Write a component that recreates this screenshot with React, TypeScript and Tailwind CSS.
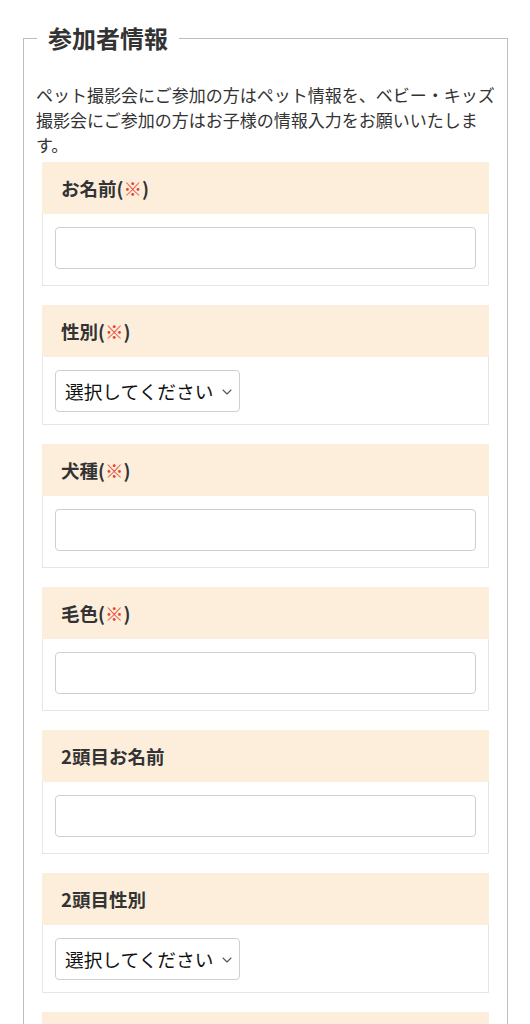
import React from "react";

type Field = { label: string; required: boolean; kind: "input" | "select" };

const fields: Field[] = [
  { label: "お名前", required: true, kind: "input" },
  { label: "性別", required: true, kind: "select" },
  { label: "犬種", required: true, kind: "input" },
  { label: "毛色", required: true, kind: "input" },
  { label: "2頭目お名前", required: false, kind: "input" },
  { label: "2頭目性別", required: false, kind: "select" },
  { label: "2頭目犬種", required: false, kind: "input" },
  { label: "2頭目毛色", required: false, kind: "input" },
];

function Chevron() {
  return (
    <svg width="10" height="6" viewBox="0 0 10 6" fill="none" className="pointer-events-none absolute right-[8px] top-[19px]">
      <path d="M1 1 L5 5 L9 1" stroke="#555" strokeWidth="1.1" strokeLinecap="round" strokeLinejoin="round" />
    </svg>
  );
}

function Card({ f }: { f: Field }) {
  return (
    <div className="mx-[6px] border border-[#e6e6e6] bg-white">
      <div className="-mx-px -mt-px bg-[#fdeedb] px-[19px] py-[13px] text-[18.5px] font-bold leading-[26px] text-[#333]">
        {f.label}
        {f.required && (
          <span>
            (<span className="text-[#e8412c]">※</span>)
          </span>
        )}
      </div>
      {f.kind === "input" ? (
        <div className="px-[12px] pb-[16px] pt-[13px]">
          <input
            type="text"
            className="block h-[42px] w-full rounded-[4px] border border-[#cfcfcf] bg-white px-[10px] text-[17px] text-[#333] outline-none"
          />
        </div>
      ) : (
        <div className="px-[12px] pb-[12px] pt-[13px]">
          <div className="relative w-[185px]">
            <select className="block h-[42px] w-full appearance-none rounded-[4px] border border-[#cfcfcf] bg-white pl-[9px] pr-[24px] text-[18.7px] text-[#111] outline-none">
              <option>選択してください</option>
              <option>オス</option>
              <option>メス</option>
            </select>
            <Chevron />
          </div>
        </div>
      )}
    </div>
  );
}

export default function App() {
  return (
    <div
      className="min-h-screen bg-white pb-[40px] pt-[20px]"
      style={{ fontFamily: '"Noto Sans CJK JP", "Noto Sans", sans-serif' }}
    >
      <fieldset className="ml-[23px] mr-[22px] border border-[#bdbdbd] px-[12px] pb-[20px]">
        <legend className="ml-[1px] px-[11px] text-[24px] font-bold leading-[36px] text-[#333]">
          参加者情報
        </legend>
        <p className="mt-[26px] text-[17px] leading-[25px] text-[#333]">
          ペット撮影会にご参加の方はペット情報を、ベビー・キッズ撮影会にご参加の方はお子様の情報入力をお願いいたします。
        </p>
        <div className="mt-[5px] flex flex-col gap-[19px]">
          {fields.map((f) => (
            <Card key={f.label} f={f} />
          ))}
        </div>
      </fieldset>
    </div>
  );
}
